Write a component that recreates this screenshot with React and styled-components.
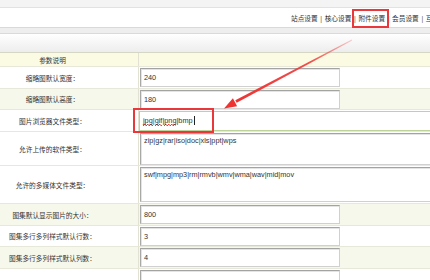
import styled, { createGlobalStyle } from 'styled-components';

const GlobalStyle = createGlobalStyle`
  html, body {
    margin: 0;
    padding: 0;
    background: #fff;
  }
  body {
    font-family: "Liberation Sans", "Noto Sans CJK SC", sans-serif;
    color: #333;
  }
  * {
    box-sizing: border-box;
  }
`;

const Page = styled.div`
  position: relative;
  width: 430px;
  height: 280px;
  overflow: hidden;
`;

const TopStrip = styled.div`
  height: 8px;
  background: #f4f4f4;
  border-bottom: 1px solid #e2e2e2;
`;

const Nav = styled.nav`
  height: 20px;
  padding: 2px 0 0 291px;
  display: flex;
  white-space: nowrap;
  border-bottom: 1px solid #d9d9d9;
  font-size: 6.7px;
  line-height: 17px;
  color: #333;
`;

const NavItem = styled.span`
  position: relative;
  display: inline-block;
  height: 17px;
  line-height: 17px;

  &::after {
    content: '';
    display: ${(p) => (p.$marked ? 'block' : 'none')};
    position: absolute;
    left: -6px;
    right: -4px;
    top: -1px;
    bottom: -1px;
    border: 2px solid #e8383b;
  }
`;

const Sep = styled.span`
  margin: 0 2.6px;
  color: #555;
`;

const Gap = styled.div`
  height: 6px;
  background: #eeeeee;
  border-bottom: 1px solid #dadada;
`;

const TitleBar = styled.div`
  height: 19px;
  background: linear-gradient(#ffffff, #ededed);
  border-bottom: 1px solid #d6d6c4;
`;

const Row = styled.div`
  display: grid;
  grid-template-columns: 139px 1fr;
  height: ${(p) => p.$h}px;
  border-bottom: 1px solid #e7e7da;
  background: ${(p) => (p.$head ? '#fbfbe3' : p.$alt ? '#f7f8ec' : '#fff')};
`;

const Label = styled.div`
  display: flex;
  align-items: center;
  justify-content: center;
  padding-right: 33px;
  border-right: 1px solid #e2e2d2;
  font-size: 6.7px;
  white-space: nowrap;
`;

const Cell = styled.div`
  position: relative;
  display: flex;
  align-items: ${(p) => (p.$top ? 'flex-start' : 'center')};
  padding: ${(p) => (p.$top ? '1px 0 0 1px' : '0 0 0 1px')};
  min-width: 0;

  &::after {
    content: '';
    display: ${(p) => (p.$marked ? 'block' : 'none')};
    position: absolute;
    left: -6px;
    top: -2px;
    width: 77px;
    height: 21px;
    border: 2px solid #e8383b;
  }
`;

const Field = styled.div`
  width: ${(p) => (p.$wide ? '300px' : '200px')};
  height: ${(p) => p.$h || 19}px;
  flex: none;
  padding: ${(p) => (p.$area ? '2px 3px' : '0 3px')};
  display: flex;
  align-items: ${(p) => (p.$area ? 'flex-start' : 'center')};
  background: #fff;
  border: 1px solid #d0d0d0;
  border-top-color: #a3a3a3;
  border-left-color: #a8a8a8;
  box-shadow: inset 1px 1px 0 #e4e4e4;
  font-size: 7.3px;
  line-height: 9px;
  color: #333;
  white-space: nowrap;
`;

const FocusField = styled.div`
  width: 300px;
  height: 20px;
  flex: none;
  margin-left: -1px;
  padding: 0 3px;
  display: flex;
  align-items: center;
  background: #fff;
  border: 1px solid #bcd49a;
  font-size: 7.3px;
  color: #333;
  white-space: nowrap;
`;

const Typo = styled.span`
  padding-bottom: 1px;
  background-image: linear-gradient(135deg, transparent 40%, #e53b3b 40%, #e53b3b 60%, transparent 60%),
    linear-gradient(45deg, transparent 40%, #e53b3b 40%, #e53b3b 60%, transparent 60%);
  background-size: 3px 2px;
  background-position: 0 100%, 1.5px 100%;
  background-repeat: repeat-x;
`;

const Caret = styled.span`
  display: inline-block;
  width: 1px;
  height: 9px;
  margin-left: 1px;
  background: #222;
  vertical-align: middle;
`;

const Arrow = styled.svg`
  position: absolute;
  left: 0;
  top: 0;
  pointer-events: none;
`;

const navLinks = ['站点设置', '核心设置', '附件设置', '会员设置', '互动设置'];

const rows = [
  { label: '缩略图默认宽度：', value: '240', h: 22 },
  { label: '缩略图默认高度：', value: '180', h: 21, alt: true },
  { label: '图片浏览器文件类型：', focus: true, h: 22 },
  { label: '允许上传的软件类型：', value: 'zip|gz|rar|iso|doc|xls|ppt|wps', h: 34, area: 32 },
  { label: '允许的多媒体文件类型：', value: 'swf|mpg|mp3|rm|rmvb|wmv|wma|wav|mid|mov', h: 38, area: 35 },
  { label: '图集默认显示图片的大小：', value: '800', h: 22, alt: true },
  { label: '图集多行多列样式默认行数：', value: '3', h: 21 },
  { label: '图集多行多列样式默认列数：', value: '4', h: 22, alt: true },
  { label: '', value: '', h: 22 },
];

const App = () => {
  return (
    <Page>
      <GlobalStyle />
      <TopStrip />
      <Nav>
        {navLinks.map((t, i) => (
          <span key={t}>
            {i > 0 && <Sep>|</Sep>}
            <NavItem $marked={t === '附件设置'}>{t}</NavItem>
          </span>
        ))}
      </Nav>
      <Gap />
      <TitleBar />
      <Row $h={14} $head>
        <Label>参数说明</Label>
        <Cell />
      </Row>
      {rows.map((r, i) => (
        <Row key={i} $h={r.h} $alt={r.alt}>
          <Label>{r.label}</Label>
          {r.focus ? (
            <Cell $marked>
              <FocusField>
                <Typo>jpg</Typo>|<Typo>gif</Typo>|<Typo>png</Typo>|bmp
                <Caret />
              </FocusField>
            </Cell>
          ) : (
            <Cell $top={!!r.area}>
              <Field $wide={!!r.area} $area={!!r.area} $h={r.area}>
                {r.value}
              </Field>
            </Cell>
          )}
        </Row>
      ))}
      <Arrow width="430" height="280" viewBox="0 0 430 280">
        <defs>
          <linearGradient id="shaft" x1="352" y1="40" x2="236" y2="102" gradientUnits="userSpaceOnUse">
            <stop offset="0" stopColor="#f04646" stopOpacity="0.25" />
            <stop offset="0.35" stopColor="#ef3b3b" stopOpacity="0.9" />
            <stop offset="1" stopColor="#ee3333" />
          </linearGradient>
        </defs>
        <polygon points="352.2,40.4 351.8,39.6 235.3,100.2 236.7,102.8" fill="url(#shaft)" />
        <polygon points="224,108.5 232.9,98.2 237.1,106.2" fill="#ee3333" />
      </Arrow>
    </Page>
  );
};

export default App;
